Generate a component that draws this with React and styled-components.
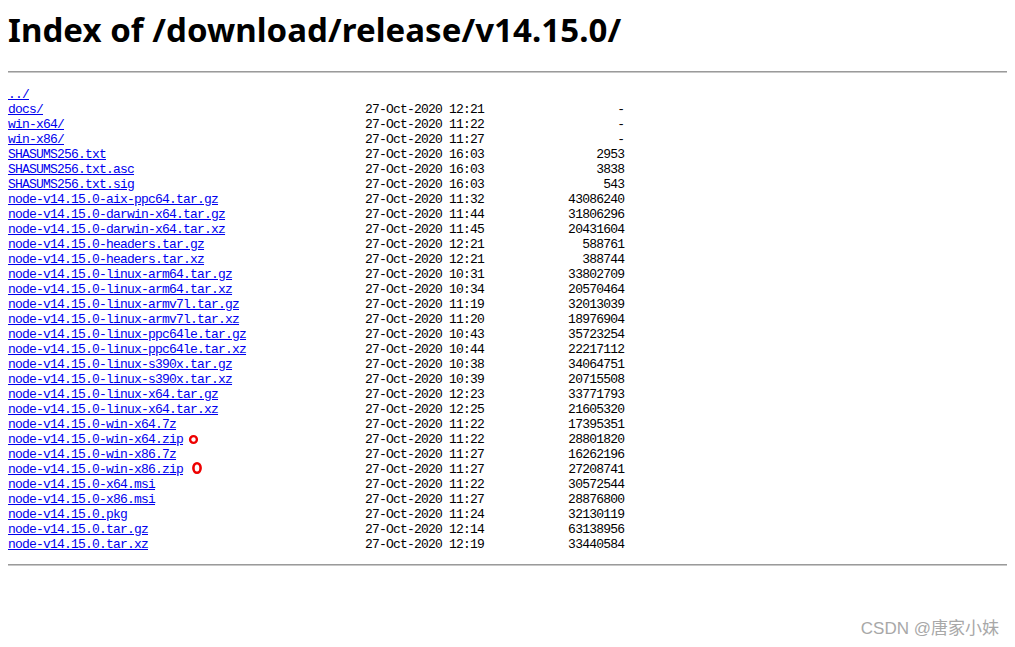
import React from 'react'
import styled, { createGlobalStyle } from 'styled-components'

const files = [
  ['../', '', ''],
  ['docs/', '27-Oct-2020 12:21', '-'],
  ['win-x64/', '27-Oct-2020 11:22', '-'],
  ['win-x86/', '27-Oct-2020 11:27', '-'],
  ['SHASUMS256.txt', '27-Oct-2020 16:03', '2953'],
  ['SHASUMS256.txt.asc', '27-Oct-2020 16:03', '3838'],
  ['SHASUMS256.txt.sig', '27-Oct-2020 16:03', '543'],
  ['node-v14.15.0-aix-ppc64.tar.gz', '27-Oct-2020 11:32', '43086240'],
  ['node-v14.15.0-darwin-x64.tar.gz', '27-Oct-2020 11:44', '31806296'],
  ['node-v14.15.0-darwin-x64.tar.xz', '27-Oct-2020 11:45', '20431604'],
  ['node-v14.15.0-headers.tar.gz', '27-Oct-2020 12:21', '588761'],
  ['node-v14.15.0-headers.tar.xz', '27-Oct-2020 12:21', '388744'],
  ['node-v14.15.0-linux-arm64.tar.gz', '27-Oct-2020 10:31', '33802709'],
  ['node-v14.15.0-linux-arm64.tar.xz', '27-Oct-2020 10:34', '20570464'],
  ['node-v14.15.0-linux-armv7l.tar.gz', '27-Oct-2020 11:19', '32013039'],
  ['node-v14.15.0-linux-armv7l.tar.xz', '27-Oct-2020 11:20', '18976904'],
  ['node-v14.15.0-linux-ppc64le.tar.gz', '27-Oct-2020 10:43', '35723254'],
  ['node-v14.15.0-linux-ppc64le.tar.xz', '27-Oct-2020 10:44', '22217112'],
  ['node-v14.15.0-linux-s390x.tar.gz', '27-Oct-2020 10:38', '34064751'],
  ['node-v14.15.0-linux-s390x.tar.xz', '27-Oct-2020 10:39', '20715508'],
  ['node-v14.15.0-linux-x64.tar.gz', '27-Oct-2020 12:23', '33771793'],
  ['node-v14.15.0-linux-x64.tar.xz', '27-Oct-2020 12:25', '21605320'],
  ['node-v14.15.0-win-x64.7z', '27-Oct-2020 11:22', '17395351'],
  ['node-v14.15.0-win-x64.zip', '27-Oct-2020 11:22', '28801820', 'small'],
  ['node-v14.15.0-win-x86.7z', '27-Oct-2020 11:27', '16262196'],
  ['node-v14.15.0-win-x86.zip', '27-Oct-2020 11:27', '27208741', 'big'],
  ['node-v14.15.0-x64.msi', '27-Oct-2020 11:22', '30572544'],
  ['node-v14.15.0-x86.msi', '27-Oct-2020 11:27', '28876800'],
  ['node-v14.15.0.pkg', '27-Oct-2020 11:24', '32130119'],
  ['node-v14.15.0.tar.gz', '27-Oct-2020 12:14', '63138956'],
  ['node-v14.15.0.tar.xz', '27-Oct-2020 12:19', '33440584']
]

// red hand-drawn rings from the screenshot annotation
function Circle({ size }) {
  const big = size === 'big'
  return (
    <Mark $big={big}>
      <svg width={big ? 12 : 11} height={big ? 14 : 11} viewBox={big ? '0 0 12 14' : '0 0 11 11'}>
        {big
          ? <ellipse cx='6' cy='7' rx='3.6' ry='4.8' fill='none' stroke='#ee0000' strokeWidth='2.6' />
          : <ellipse cx='5.5' cy='5.5' rx='3.4' ry='3.4' fill='none' stroke='#ee0000' strokeWidth='2.4' />}
      </svg>
    </Mark>
  )
}

function App() {
  return (
    <>
      <GlobalStyle />
      <Title>Index of /download/release/v14.15.0/</Title>
      <TopRule />
      <Listing>
        {files.map(([name, date, size, mark]) => {
          const gap = ' '.repeat(Math.max(1, 51 - name.length))
          return (
            <Row key={name}>
              <Link href='#'>{name}</Link>
              {mark ? <Circle size={mark} /> : null}
              {date ? <span>{gap}{date}{size.padStart(20)}</span> : null}
            </Row>
          )
        })}
      </Listing>
      <BottomRule />
      <Watermark>CSDN @唐家小妹</Watermark>
    </>
  )
}

const GlobalStyle = createGlobalStyle`
  html, body {
    margin: 0;
    background: #fff;
  }
  body {
    padding: 8px;
    min-height: 647px;
    box-sizing: border-box;
    position: relative;
  }
`

const Title = styled.h1`
  margin: 2px 0 0;
  font-family: 'Noto Sans', 'Liberation Sans', sans-serif;
  font-weight: bold;
  font-size: 33px;
  letter-spacing: 0.05px;
  line-height: 40px;
  color: #000;
`

const TopRule = styled.hr`
  margin: 21px 0 14px;
  height: 0;
  border: none;
  border-top: 1px solid #9a9a9a;
  border-bottom: 1px solid #c8c8c8;
`

const BottomRule = styled(TopRule)`
  margin: 12px 0 0;
`

const Listing = styled.pre`
  margin: 0;
  font-family: 'Liberation Mono', 'Courier New', monospace;
  font-size: 13px;
  letter-spacing: -0.8px;
  line-height: 15px;
  color: #000;
`

const Row = styled.div`
  position: relative;
  height: 15px;
  white-space: pre;
`

const Link = styled.a`
  color: #0000ee;
  text-decoration: underline;
`

const Mark = styled.span`
  position: absolute;
  top: ${p => (p.$big ? '-1px' : '2px')};
  left: ${p => (p.$big ? '183px' : '180px')};
  line-height: 0;
`

const Watermark = styled.div`
  position: absolute;
  right: 16px;
  bottom: 8px;
  font-family: 'Liberation Sans', 'Noto Sans CJK SC', sans-serif;
  font-size: 17px;
  color: #a8a8a8;
`

export default App
